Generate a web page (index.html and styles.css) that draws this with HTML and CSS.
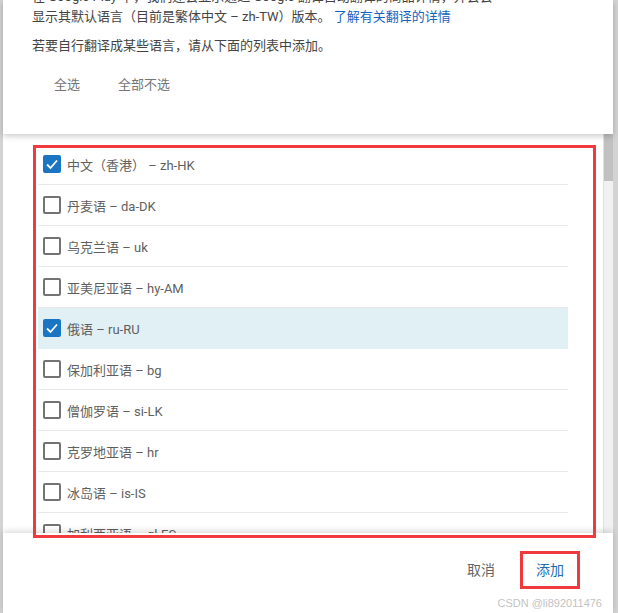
FILE: index.html
```html
<!DOCTYPE html>
<html lang="zh-CN">
<head>
<meta charset="utf-8">
<link rel="stylesheet" href="styles.css">
</head>
<body>
<div class="dialog">
  <header class="head">
    <p class="intro">在 Google Play 中，我们还会显示通过 Google 翻译自动翻译的商品详情，并会会<br>显示其默认语言（目前是繁体中文 – zh-TW）版本。 <a class="link">了解有关翻译的详情</a></p>
    <p class="hint">若要自行翻译成某些语言，请从下面的列表中添加。</p>
    <div class="sel-row">
      <span class="sel-btn">全选</span>
      <span class="sel-btn">全部不选</span>
    </div>
  </header>
  <div class="scroll">
    <ul class="list">
      <li class="row"><span class="cb on"><svg viewBox="0 0 18 18"><polyline points="4,9.5 7.5,13 14,5.5"/></svg></span><span>中文（香港） – zh-HK</span></li>
      <li class="row"><span class="cb"></span><span>丹麦语 – da-DK</span></li>
      <li class="row"><span class="cb"></span><span>乌克兰语 – uk</span></li>
      <li class="row"><span class="cb"></span><span>亚美尼亚语 – hy-AM</span></li>
      <li class="row hl"><span class="cb on"><svg viewBox="0 0 18 18"><polyline points="4,9.5 7.5,13 14,5.5"/></svg></span><span>俄语 – ru-RU</span></li>
      <li class="row"><span class="cb"></span><span>保加利亚语 – bg</span></li>
      <li class="row"><span class="cb"></span><span>僧伽罗语 – si-LK</span></li>
      <li class="row"><span class="cb"></span><span>克罗地亚语 – hr</span></li>
      <li class="row"><span class="cb"></span><span>冰岛语 – is-IS</span></li>
      <li class="row"><span class="cb"></span><span>加利西亚语 – gl-ES</span></li>
      <li class="row"><span class="cb"></span><span>加泰罗尼亚语 – ca</span></li>
    </ul>
    <div class="sb"><div class="thumb"></div></div>
  </div>
  <footer class="foot">
    <span class="f-btn">取消</span>
    <span class="f-btn add">添加</span>
    <span class="mark">CSDN @li892011476</span>
  </footer>
</div>
<div class="annot"></div>
</body>
</html>
```
FILE: styles.css
```css
html, body {
  margin: 0;
  padding: 0;
  height: 613px;
  overflow: hidden;
  background: #d3d3d3;
  font-family: Roboto, "Noto Sans CJK SC", sans-serif;
}
.dialog {
  position: relative;
  margin: 0 5px 0 3px;
  height: 613px;
  background: #fff;
  display: flex;
  flex-direction: column;
}
.head {
  height: 134px;
  flex: none;
  position: relative;
  z-index: 2;
  background: #fff;
  box-shadow: 0 2px 6px rgba(0,0,0,0.22);
  padding: 0 0 0 29px;
  box-sizing: border-box;
  overflow: hidden;
}
.intro {
  margin: -13px 0 0;
  font-size: 13px;
  line-height: 20px;
  color: #444;
  white-space: nowrap;
}
.link { color: #1565c0; }
.hint {
  margin: 9px 0 0;
  font-size: 13px;
  line-height: 20px;
  color: #444;
}
.sel-row {
  display: flex;
  gap: 38px;
  padding-left: 22px;
  margin-top: 19px;
}
.sel-btn {
  font-size: 13px;
  line-height: 20px;
  color: #757575;
}
.scroll {
  flex: 1;
  min-height: 0;
  overflow: hidden;
  position: relative;
  z-index: 1;
  display: flex;
}
.list {
  flex: 1;
  list-style: none;
  margin: 0;
  padding: 10px 35px 0 35px;
}
.sb {
  width: 9px;
  flex: none;
  background: #f1f1f1;
  border-left: 1px solid #e2e2e2;
}
.thumb {
  height: 47px;
  background: #c1c1c1;
}
.row {
  height: 41px;
  box-sizing: border-box;
  border-bottom: 1px solid #e9e9e9;
  display: flex;
  align-items: center;
  gap: 6px;
  padding-left: 5px;
  font-size: 13px;
  color: #5f5f5f;
}
.row.hl { background: #e1f0f4; border-bottom-color: #e1f0f4; }
.cb {
  width: 18px;
  height: 18px;
  box-sizing: border-box;
  border: 2px solid #737373;
  border-radius: 2px;
  flex: none;
  display: flex;
}
.cb.on { background: #1a76c2; border-color: #1a76c2; }
.cb svg { width: 18px; height: 18px; margin: -2px; }
.cb polyline { fill: none; stroke: #fff; stroke-width: 1.8; }
.foot {
  height: 80px;
  flex: none;
  position: relative;
  z-index: 2;
  background: #fff;
  box-shadow: 0 -2px 6px rgba(0,0,0,0.15);
  display: flex;
  align-items: flex-start;
  justify-content: flex-end;
  padding: 18px 33px 0 0;
  box-sizing: border-box;
  gap: 25px;
}
.f-btn {
  font-size: 14px;
  line-height: 38px;
  color: #666;
}
.f-btn.add {
  color: #1e6bb3;
  border: 3px solid #f0393d;
  padding: 0 13px;
  line-height: 32px;
}
.mark {
  position: absolute;
  right: 11px;
  bottom: 4px;
  font-size: 11px;
  color: #c3c3c3;
  font-family: "Liberation Sans", sans-serif;
}
.annot {
  position: absolute;
  left: 33px;
  top: 145px;
  width: 557px;
  height: 387px;
  border: 3px solid #f23a3e;
  z-index: 5;
}
```
